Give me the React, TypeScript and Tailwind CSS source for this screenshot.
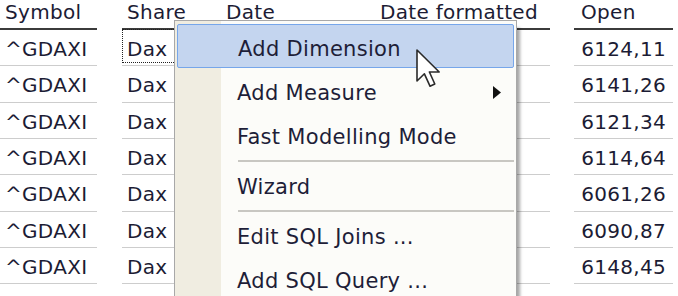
import React from 'react';

const rows = [
  { symbol: '^GDAXI', share: 'Dax', open: '6124,11' },
  { symbol: '^GDAXI', share: 'Dax', open: '6141,26' },
  { symbol: '^GDAXI', share: 'Dax', open: '6121,34' },
  { symbol: '^GDAXI', share: 'Dax', open: '6114,64' },
  { symbol: '^GDAXI', share: 'Dax', open: '6061,26' },
  { symbol: '^GDAXI', share: 'Dax', open: '6090,87' },
  { symbol: '^GDAXI', share: 'Dax', open: '6148,45' },
];

type Item = { label?: string; sep?: boolean; active?: boolean; sub?: boolean };

const items: Item[] = [
  { label: 'Add Dimension', active: true },
  { label: 'Add Measure', sub: true },
  { label: 'Fast Modelling Mode' },
  { sep: true },
  { label: 'Wizard' },
  { sep: true },
  { label: 'Edit SQL Joins ...' },
  { label: 'Add SQL Query ...' },
];

function Cursor() {
  return (
    <svg width="28" height="40" viewBox="0 0 14 20" className="absolute left-[416px] top-[49px]">
      <path
        d="M0.5 0.5 L0.5 16 L4.2 12.4 L7 18.6 L9.4 17.5 L6.7 11.5 L11.6 11.5 Z"
        fill="#ffffff"
        stroke="#2a2a2a"
        strokeWidth="0.8"
        strokeLinejoin="round"
      />
    </svg>
  );
}

function ContextMenu() {
  return (
    <div className="absolute left-[174px] top-[20px] w-[343px] h-[290px] border border-[#a8a8a8] bg-[#fcfcf9] shadow-[5px_6px_3px_-2px_rgba(0,0,0,0.35)]">
      <div className="absolute left-0 top-0 bottom-0 w-[46px] bg-[#f0ede1]" />
      <div className="relative pt-[3px] px-[2px]">
        {items.map((it, i) =>
          it.sep ? (
            <div key={i} className="h-[6px] pt-[3px] pl-[61px]">
              <div className="h-[1.5px] bg-[#c8c7c2]" />
            </div>
          ) : (
            <div
              key={i}
              className={
                'relative h-[44px] pl-[60px] pt-[12px] leading-[24px] text-[21px] tracking-[0.3px] text-[#1e1e38] ' +
                (it.active ? 'bg-[#c4d5ef] border border-[#76a6ea] rounded-[2px] h-[43px] pl-[59px] pt-[11px] mb-[1px]' : '')
              }
            >
              {it.label}
              {it.sub && (
                <svg width="8" height="13" viewBox="0 0 8 13" className="absolute left-[316px] top-[17px]">
                  <path d="M0 0 L8 6.5 L0 13 Z" fill="#111" />
                </svg>
              )}
            </div>
          )
        )}
      </div>
    </div>
  );
}

export default function App() {
  const cell = 'shrink-0 leading-[24px]';
  return (
    <div
      className="relative w-[678px] h-[296px] overflow-hidden bg-white text-[20px] tracking-[0.3px] text-[#1c1c34]"
      style={{ fontFamily: '"DejaVu Sans", Verdana, sans-serif' }}
    >
      <div className="flex h-[30px]">
        <div className={`${cell} w-[97px] pl-[5px] border-b-2 border-[#3b3b3b]`}>Symbol</div>
        <div className={`${cell} ml-[25px] w-[80px] pl-[5px] border-b-2 border-[#3b3b3b]`}>Share</div>
        <div className={`${cell} ml-[20px] w-[134px] pl-[4px] border-b-2 border-[#3b3b3b]`}>Date</div>
        <div className={`${cell} ml-[22px] w-[172px] pl-[2px] border-b-2 border-[#3b3b3b]`}>Date formatted</div>
        <div className={`${cell} ml-[24px] w-[99px] pl-[7px] border-b-2 border-[#3b3b3b]`}>Open</div>
      </div>
      {rows.map((r, i) => (
        <div key={i} className="flex h-[36.33px]">
          <div className={`${cell} w-[97px] pl-[5px] pt-[7px] border-b border-[#cdcdcd]`}>{r.symbol}</div>
          <div className={`${cell} relative ml-[25px] w-[80px] pl-[5px] pt-[7px] border-b border-[#cdcdcd]`}>
            {r.share}
            {i === 0 && <div className="absolute left-0 right-0 top-[-1px] bottom-[2px] border border-dotted border-[#222]" />}
          </div>
          <div className={`${cell} ml-[20px] w-[134px] border-b border-[#cdcdcd]`} />
          <div className={`${cell} ml-[22px] w-[172px] border-b border-[#cdcdcd]`} />
          <div className={`${cell} ml-[24px] w-[99px] pr-[7px] pt-[7px] text-right border-b border-[#cdcdcd]`}>{r.open}</div>
        </div>
      ))}
      <ContextMenu />
      <Cursor />
    </div>
  );
}
